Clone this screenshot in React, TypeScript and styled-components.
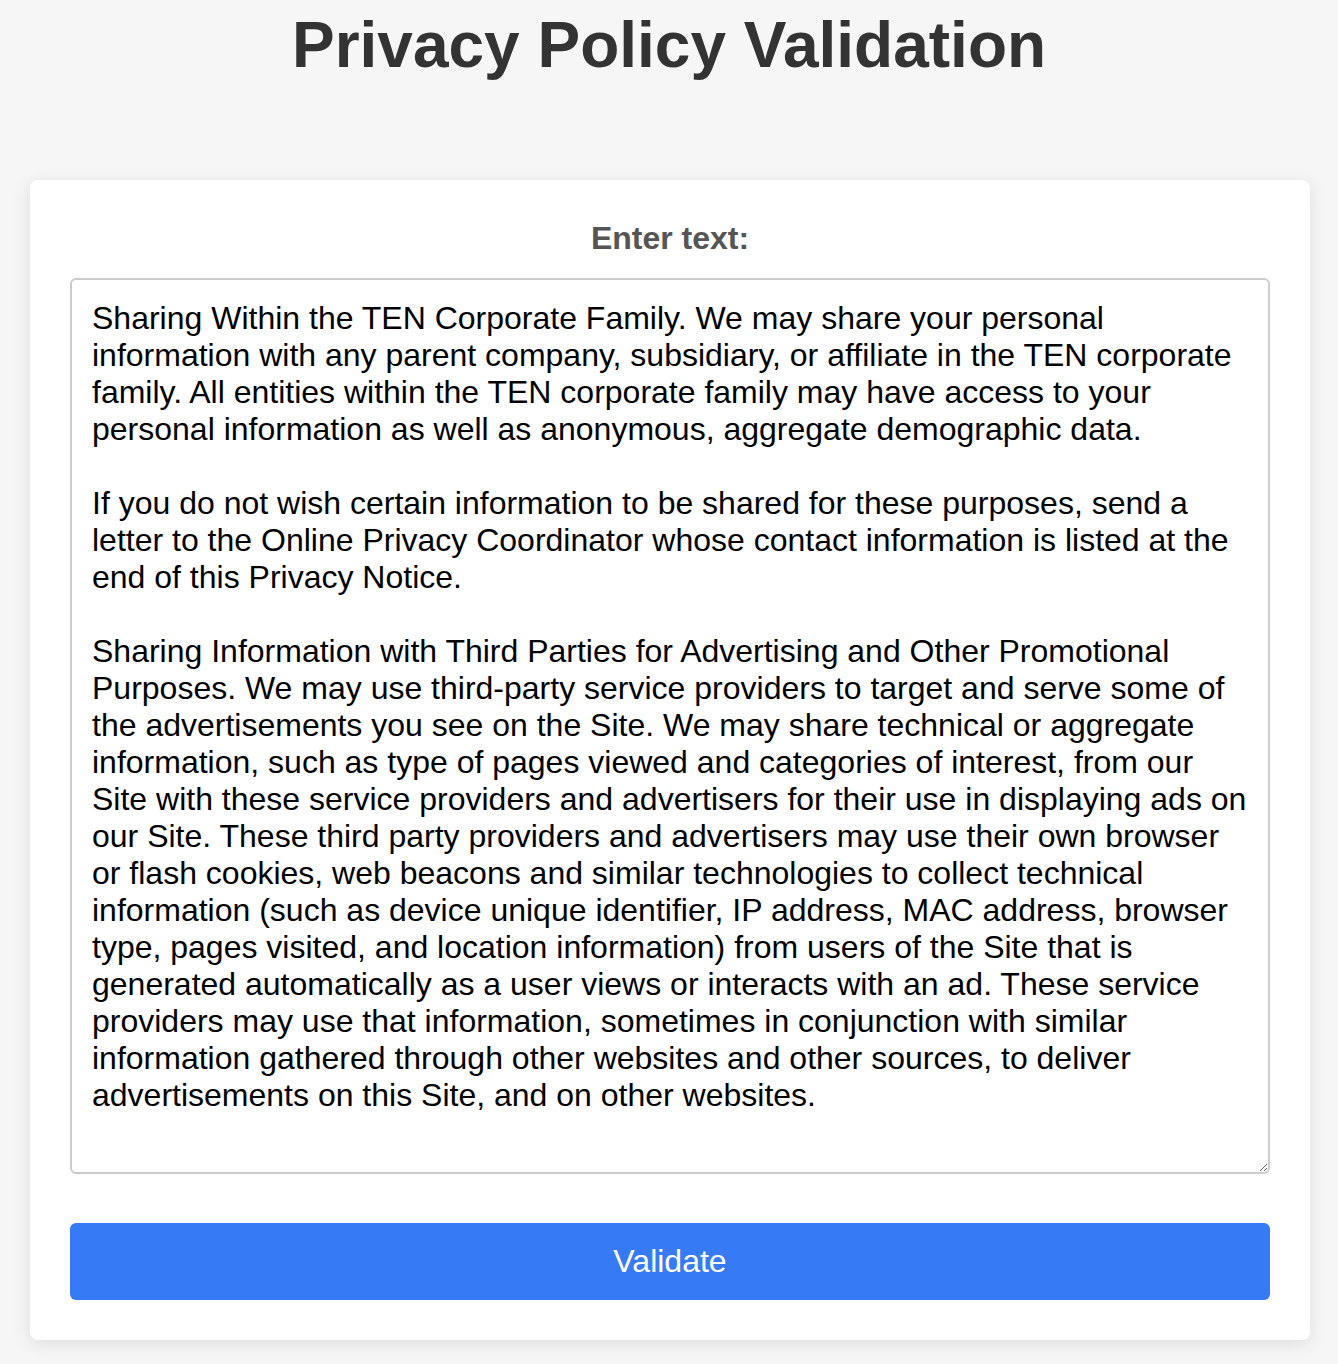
import React from "react";
import styled, { createGlobalStyle } from "styled-components";

const GlobalStyle = createGlobalStyle`
  html, body {
    margin: 0;
    padding: 0;
    background: #f6f6f6;
    font-family: "Liberation Sans", Arial, Helvetica, sans-serif;
  }
  body {
    padding: 8px 0 24px;
  }
`;

const Page = styled.main`
  display: flex;
  flex-direction: column;
  align-items: center;
`;

const Title = styled.h1`
  margin: 0 0 98px;
  font-size: 64px;
  font-weight: 700;
  color: #333;
  text-align: center;
`;

const Card = styled.section`
  box-sizing: border-box;
  width: 1280px;
  margin-left: 2px;
  background: #fff;
  border-radius: 8px;
  box-shadow: 0 4px 20px rgba(0, 0, 0, 0.1);
  padding: 40px 40px 40px;
  display: flex;
  flex-direction: column;
`;

const Label = styled.label`
  display: block;
  text-align: center;
  font-size: 32px;
  font-weight: 700;
  color: #555;
  margin-bottom: 21px;
`;

const TextArea = styled.textarea`
  display: block;
  box-sizing: border-box;
  width: 100%;
  height: 896px;
  padding: 20px;
  border: 2px solid #ccc;
  border-radius: 6px;
  font-family: "Liberation Sans", Arial, Helvetica, sans-serif;
  font-size: 32px;
  line-height: normal;
  color: #000;
  background: #fff;
  resize: vertical;
  margin: 0 0 49px;
  outline: none;
`;

const Button = styled.button`
  display: block;
  width: 100%;
  box-sizing: border-box;
  padding: 20px;
  border: none;
  border-radius: 6px;
  background: #367bf5;
  color: #fff;
  font-family: "Liberation Sans", Arial, Helvetica, sans-serif;
  font-size: 32px;
  line-height: normal;
  cursor: pointer;
`;

const policyText = `Sharing Within the TEN Corporate Family. We may share your personal information with any parent company, subsidiary, or affiliate in the TEN corporate family. All entities within the TEN corporate family may have access to your personal information as well as anonymous, aggregate demographic data.

If you do not wish certain information to be shared for these purposes, send a letter to the Online Privacy Coordinator whose contact information is listed at the end of this Privacy Notice.

Sharing Information with Third Parties for Advertising and Other Promotional Purposes. We may use third-party service providers to target and serve some of the advertisements you see on the Site. We may share technical or aggregate information, such as type of pages viewed and categories of interest, from our Site with these service providers and advertisers for their use in displaying ads on our Site. These third party providers and advertisers may use their own browser or flash cookies, web beacons and similar technologies to collect technical information (such as device unique identifier, IP address, MAC address, browser type, pages visited, and location information) from users of the Site that is generated automatically as a user views or interacts with an ad. These service providers may use that information, sometimes in conjunction with similar information gathered through other websites and other sources, to deliver advertisements on this Site, and on other websites.`;

export default function App() {
  return (
    <>
      <GlobalStyle />
      <Page>
        <Title>Privacy Policy Validation</Title>
        <Card>
          <Label htmlFor="policy">Enter text:</Label>
          <TextArea id="policy" defaultValue={policyText} />
          <Button type="button">Validate</Button>
        </Card>
      </Page>
    </>
  );
}
